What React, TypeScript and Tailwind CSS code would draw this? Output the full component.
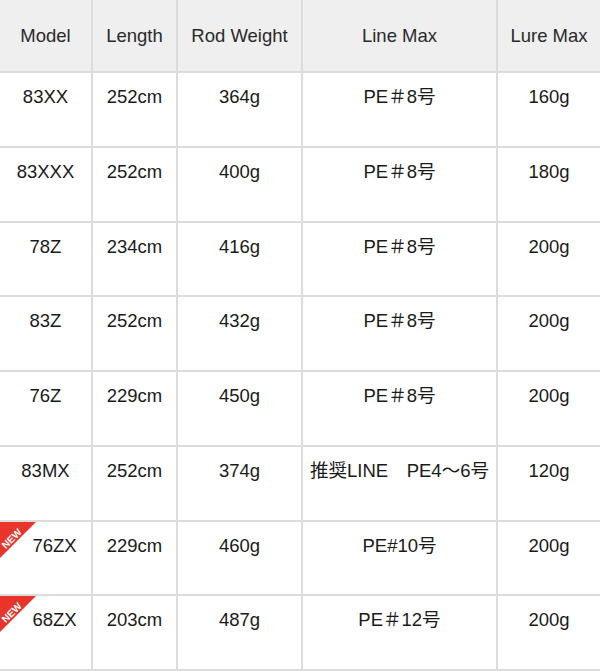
import React from "react";

type Row = { model: string; length: string; weight: string; line: string; lure: string; isNew?: boolean };

const rows: Row[] = [
  { model: "83XX", length: "252cm", weight: "364g", line: "PE＃8号", lure: "160g" },
  { model: "83XXX", length: "252cm", weight: "400g", line: "PE＃8号", lure: "180g" },
  { model: "78Z", length: "234cm", weight: "416g", line: "PE＃8号", lure: "200g" },
  { model: "83Z", length: "252cm", weight: "432g", line: "PE＃8号", lure: "200g" },
  { model: "76Z", length: "229cm", weight: "450g", line: "PE＃8号", lure: "200g" },
  { model: "83MX", length: "252cm", weight: "374g", line: "推奨LINE　PE4〜6号", lure: "120g" },
  { model: "76ZX", length: "229cm", weight: "460g", line: "PE#10号", lure: "200g", isNew: true },
  { model: "68ZX", length: "203cm", weight: "487g", line: "PE＃12号", lure: "200g", isNew: true },
];

const headers = ["Model", "Length", "Rod Weight", "Line Max", "Lure Max"];

function NewBadge() {
  return (
    <div className="absolute left-0 top-0 h-[36px] w-[36px] overflow-hidden">
      <div className="absolute left-0 top-0 h-0 w-0 border-t-[36px] border-r-[36px] border-t-[#e8352b] border-r-transparent" />
      <span className="absolute left-0 top-[12px] w-[24px] -rotate-45 text-center text-[10px] font-bold leading-[10px] text-white">
        NEW
      </span>
    </div>
  );
}

export default function App() {
  return (
    <div
      className="h-[671px] w-[600px] overflow-hidden bg-white text-[18.5px] text-[#1a1a1a]"
      style={{ fontFamily: '"Liberation Sans", "Noto Sans CJK JP", sans-serif' }}
    >
      <div className="grid h-[671px] grid-cols-[93px_85px_125px_195px_102px] grid-rows-[73px_repeat(8,1fr)]">
        {headers.map((h, i) => (
          <div
            key={h}
            className={`flex items-center justify-center border-b-2 border-[#dcdcdc] bg-[#efefef] text-[#2a2a2a] ${
              i < 4 ? "border-r-2" : ""
            }`}
          >
            {h}
          </div>
        ))}
        {rows.map((r) => {
          const cells = [r.model, r.length, r.weight, r.line, r.lure];
          return cells.map((c, i) => (
            <div
              key={r.model + i}
              className={`relative border-b-2 border-[#dcdcdc] pt-[12px] text-center leading-6 ${
                i < 4 ? "border-r-2" : ""
              }`}
            >
              {i === 0 && r.isNew && <NewBadge />}
              <span className={i === 0 && r.isNew ? "pl-[18px]" : ""}>{c}</span>
            </div>
          ));
        })}
      </div>
    </div>
  );
}
